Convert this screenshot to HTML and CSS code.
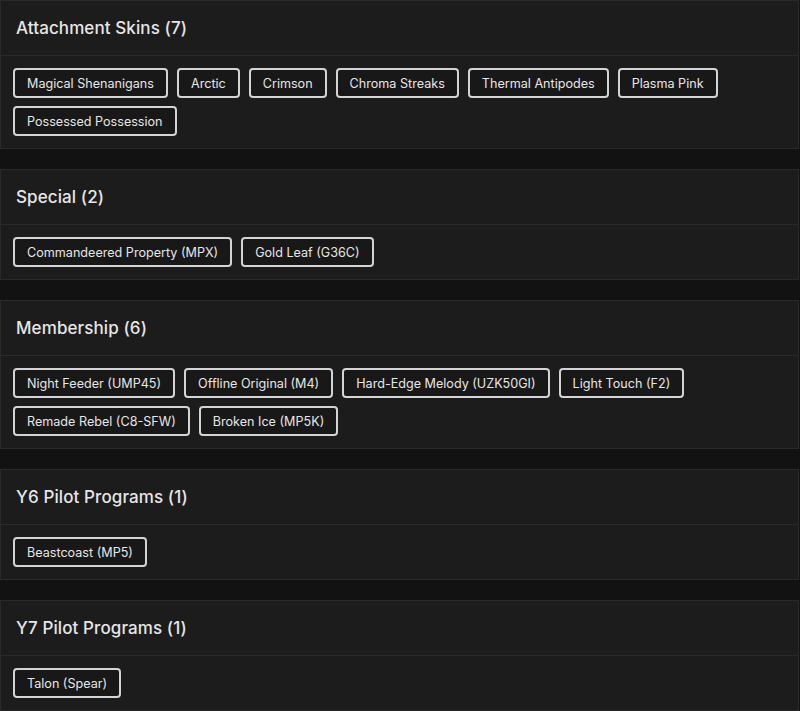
FILE: index.html
```html
<!DOCTYPE html>
<html>
  <head>
    <meta charset="UTF-8">
    <title>Skins</title>
    <link rel="stylesheet" href="styles.css">
  </head>
  <body>
    <div id="list">

      <div class="card">
        <div class="card-head">Attachment Skins (7)</div>
        <div class="card-body">
          <span class="chip">Magical Shenanigans</span>
          <span class="chip">Arctic</span>
          <span class="chip">Crimson</span>
          <span class="chip">Chroma Streaks</span>
          <span class="chip">Thermal Antipodes</span>
          <span class="chip">Plasma Pink</span>
          <span class="chip">Possessed Possession</span>
        </div>
      </div>

      <div class="card">
        <div class="card-head">Special (2)</div>
        <div class="card-body">
          <span class="chip">Commandeered Property (MPX)</span>
          <span class="chip">Gold Leaf (G36C)</span>
        </div>
      </div>

      <div class="card">
        <div class="card-head">Membership (6)</div>
        <div class="card-body">
          <span class="chip">Night Feeder (UMP45)</span>
          <span class="chip">Offline Original (M4)</span>
          <span class="chip">Hard-Edge Melody (UZK50GI)</span>
          <span class="chip">Light Touch (F2)</span>
          <span class="chip">Remade Rebel (C8-SFW)</span>
          <span class="chip">Broken Ice (MP5K)</span>
        </div>
      </div>

      <div class="card">
        <div class="card-head">Y6 Pilot Programs (1)</div>
        <div class="card-body">
          <span class="chip">Beastcoast (MP5)</span>
        </div>
      </div>

      <div class="card">
        <div class="card-head">Y7 Pilot Programs (1)</div>
        <div class="card-body">
          <span class="chip">Talon (Spear)</span>
        </div>
      </div>

    </div>
  </body>
</html>
```

FILE: styles.css
```css
 * {
	margin: 0px;
	padding: 0px;
	box-sizing: border-box;
 }
 html, body {
	background-color: #121212;
	font-family: "Inter", "Noto Sans", sans-serif;
	color: #e6e6e6;
 }
 #list {
	display: flex;
	flex-direction: column;
	gap: 20px;
	padding-right: 1px;
 }
 .card {
	background-color: #1c1c1c;
	border: 1px solid #2a2a2a;
 }
 .card-head {
	height: 55px;
	display: flex;
	align-items: center;
	padding: 0px 15px;
	font-size: 17px;
	font-weight: 500;
	letter-spacing: 0.1px;
	border-bottom: 1px solid #2a2a2a;
 }
 .card-body {
	display: flex;
	flex-wrap: wrap;
	gap: 8px 9px;
	padding: 12px 12px 12px 12px;
 }
 .chip {
	height: 30px;
	display: flex;
	align-items: center;
	padding: 0px 12px;
	border: 2px solid #d4d4d4;
	border-radius: 4px;
	background-color: #181818;
	font-size: 12.6px;
	color: #e6e6e6;
 }
```
